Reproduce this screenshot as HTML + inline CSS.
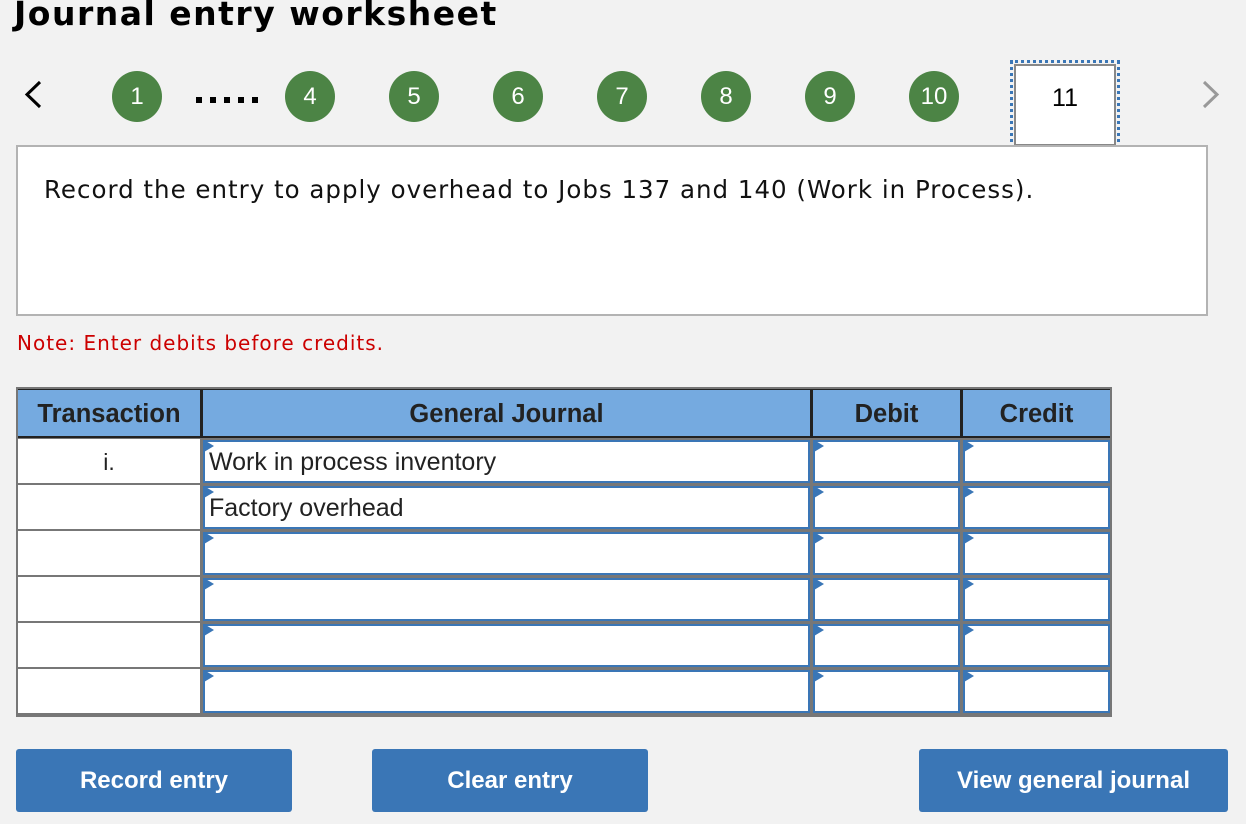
<!DOCTYPE html>
<html><head><style>
*{margin:0;padding:0;box-sizing:border-box}
body{width:1246px;height:824px;background:#f2f2f2;font-family:"Liberation Sans",Arial,sans-serif;position:relative;overflow:hidden}
.a{position:absolute}
h1{position:absolute;left:14px;top:-6px;font-family:"DejaVu Sans",sans-serif;font-size:33px;letter-spacing:1.5px;font-weight:bold;color:#000;white-space:nowrap}
.c{position:absolute;top:71px;width:50px;height:51px;border-radius:50%;background:#4c8445;color:#fff;font-size:24px;text-align:center;line-height:51px}
.btn{position:absolute;top:749px;height:63px;background:#3a76b6;border-radius:3px;color:#fff;font-weight:bold;font-size:24px;text-align:center;line-height:63px}
.cell{position:absolute;background:#fff}
.inp{position:absolute;background:#fff;border:2px solid #3a76b6;font-size:25px;color:#222;padding-left:4px;line-height:41px}
.tri{position:absolute;width:0;height:0;border-top:6px solid transparent;border-bottom:6px solid transparent;border-left:10px solid #3a76b6}
.hd{position:absolute;top:390px;height:46px;background:#75aae0;font-weight:bold;font-size:25.5px;color:#222;text-align:center;line-height:48px}
.dot{position:absolute;top:97px;width:6px;height:6px;background:#000}
</style></head><body>
<h1>Journal entry worksheet</h1>
<svg class="a" style="left:20px;top:80px" width="26" height="30"><path d="M20 2 L7 14.5 L20 27" fill="none" stroke="#000" stroke-width="3"/></svg>
<div class="c" style="left:112px">1</div>
<div class="dot" style="left:196px"></div><div class="dot" style="left:210px"></div><div class="dot" style="left:224px"></div><div class="dot" style="left:238px"></div><div class="dot" style="left:252px"></div>
<div class="c" style="left:285px">4</div>
<div class="c" style="left:389px">5</div>
<div class="c" style="left:493px">6</div>
<div class="c" style="left:597px">7</div>
<div class="c" style="left:701px">8</div>
<div class="c" style="left:805px">9</div>
<div class="c" style="left:909px">10</div>
<div class="a" style="left:1014px;top:64px;width:102px;height:82px;background:#fff;border:2px solid #888;outline:3px dotted #3a76b6;outline-offset:1px;text-align:center;line-height:64px;font-size:25px">11</div>
<svg class="a" style="left:1198px;top:80px" width="26" height="30"><path d="M6 2 L19 14.5 L6 27" fill="none" stroke="#999" stroke-width="3"/></svg>
<div class="a" style="left:16px;top:145px;width:1192px;height:171px;background:#fff;border:2px solid #b3b3b3"></div>
<div class="a" style="left:44px;top:175px;font-family:'DejaVu Sans',sans-serif;font-size:24.5px;letter-spacing:1px;color:#111;white-space:nowrap">Record the entry to apply overhead to Jobs 137 and 140 (Work in Process).</div>
<div class="a" style="left:17px;top:331px;font-family:'DejaVu Sans',sans-serif;font-size:20px;letter-spacing:1px;color:#c00;white-space:nowrap">Note: Enter debits before credits.</div>
<div class="a" style="left:16px;top:387px;width:1096px;height:330px;background:#777"></div>
<div class="a" style="left:18px;top:389px;width:1092px;height:49px;background:#222"></div>
<div class="hd" style="left:18px;width:182px">Transaction</div>
<div class="hd" style="left:203px;width:607px">General Journal</div>
<div class="hd" style="left:813px;width:147px">Debit</div>
<div class="hd" style="left:963px;width:147px">Credit</div>
<div id="rows"></div>
<div class="btn" style="left:16px;width:276px">Record entry</div>
<div class="btn" style="left:372px;width:276px">Clear entry</div>
<div class="btn" style="left:919px;width:309px">View general journal</div>
<script>
var h='',txt=['i.','','','','',''],gj=['Work in process inventory','Factory overhead','','','',''];
for(var i=0;i<6;i++){var y=439+i*46;
h+='<div class="cell" style="left:18px;top:'+y+'px;width:182px;height:44px;text-align:center;font-size:23px;line-height:46px;color:#222">'+txt[i]+'</div>';
h+='<div class="inp" style="left:203px;top:'+(y+1)+'px;width:607px;height:43px">'+gj[i]+'</div>';
h+='<div class="inp" style="left:813px;top:'+(y+1)+'px;width:147px;height:43px"></div>';
h+='<div class="inp" style="left:963px;top:'+(y+1)+'px;width:147px;height:43px"></div>';
[203,813,963].forEach(function(x){h+='<div class="tri" style="left:'+(x+1)+'px;top:'+(y+1)+'px"></div>'});}
document.getElementById('rows').innerHTML=h;
</script>
</body></html>
